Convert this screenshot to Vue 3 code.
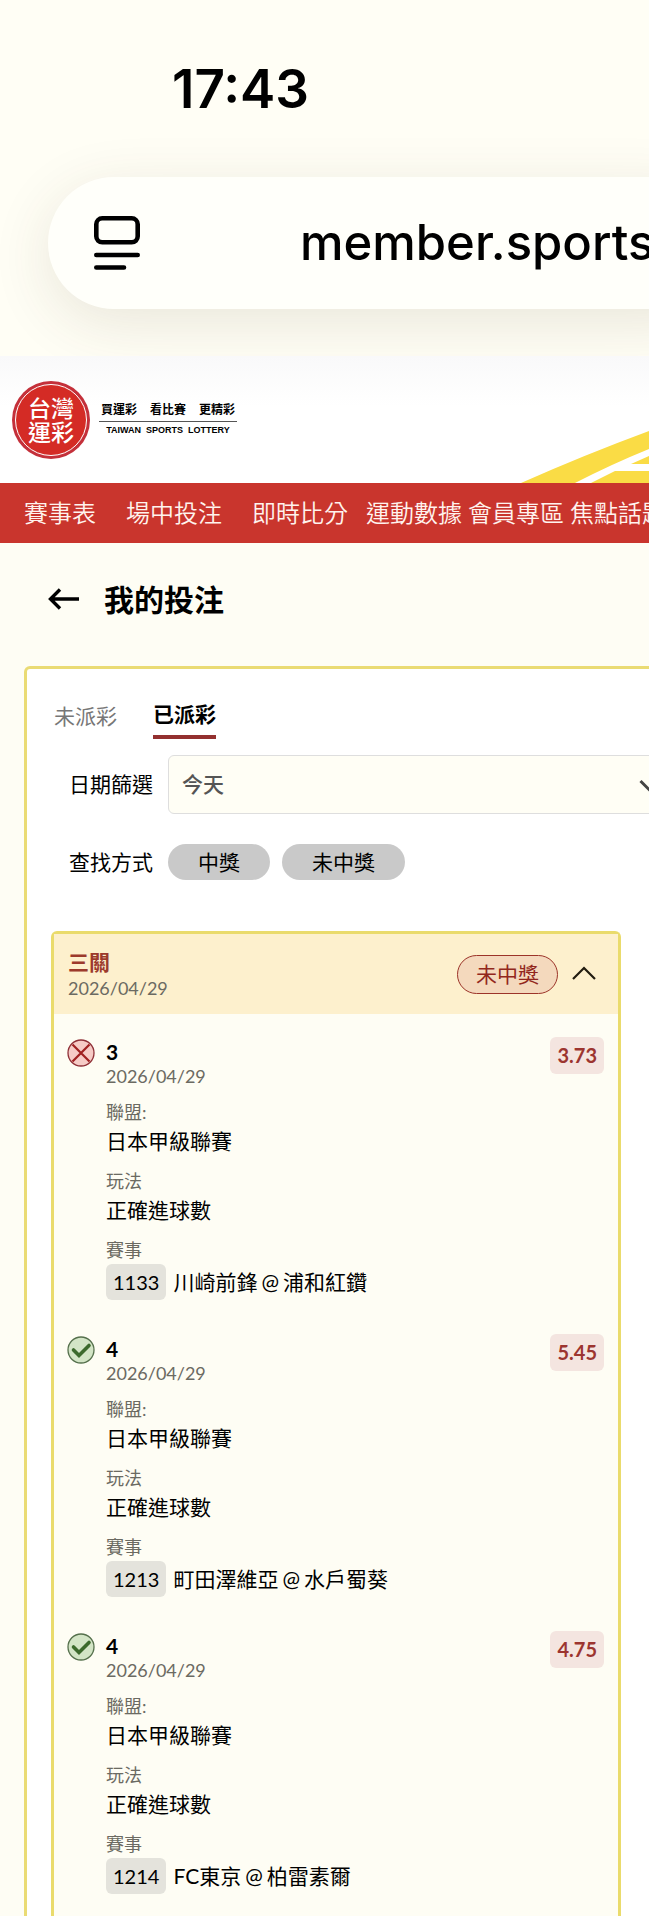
<script setup>
import { ref } from 'vue'

const navItems = [
  { label: '賽事表', gap: 'wide' },
  { label: '場中投注', gap: 'wide' },
  { label: '即時比分', gap: 'medium' },
  { label: '運動數據', gap: 'narrow' },
  { label: '會員專區', gap: 'narrow' },
  { label: '焦點話題', gap: 'narrow' }
]

const address = ref('member.sports')
const tabs = ['未派彩', '已派彩']
const activeTab = ref('已派彩')
const period = ref('今天')
const results = ['中獎', '未中獎']
const open = ref(true)

const bets = [
  { id: 1, won: false, pick: '3', date: '2026/04/29', league: '日本甲級聯賽', play: '正確進球數', code: '1133', away: '川崎前鋒', home: '浦和紅鑽', odds: '3.73' },
  { id: 2, won: true, pick: '4', date: '2026/04/29', league: '日本甲級聯賽', play: '正確進球數', code: '1213', away: '町田澤維亞', home: '水戶蜀葵', odds: '5.45' },
  { id: 3, won: true, pick: '4', date: '2026/04/29', league: '日本甲級聯賽', play: '正確進球數', code: '1214', away: 'FC東京', home: '柏雷素爾', odds: '4.75' }
]
</script>

<template>
  <div class="page">
    <div class="browser">
      <time class="clock">17:43</time>
      <div class="address-bar">
        <button class="icon-button" type="button" aria-label="頁面選單">
          <svg width="48" height="56" viewBox="0 0 48 56" fill="none" stroke="#000" stroke-width="4.6" stroke-linecap="round">
            <rect x="3.3" y="3.3" width="41.4" height="24" rx="6" />
            <path d="M3.3 40H44.7M3.3 52.5H31" />
          </svg>
        </button>
        <input v-model="address" class="address" type="text" aria-label="網址" />
      </div>
    </div>

    <header class="masthead">
      <a class="brand" href="#" aria-label="台灣運彩">
        <span class="seal"><span class="seal-ring"><span>台灣</span><span>運彩</span></span></span>
        <span class="slogan">
          <span class="slogan-zh"><span>買運彩</span><span>看比賽</span><span>更精彩</span></span>
          <span class="slogan-en"><span>TAIWAN</span><span>SPORTS</span><span>LOTTERY</span></span>
        </span>
      </a>
      <svg class="stripes" width="131" height="52" viewBox="0 0 131 52" fill="#fadc45" aria-hidden="true">
        <path d="M3 52Q66 24 131 0V18Q94 33 57 52Z" />
        <path d="M131 25V33H113Z" />
        <path d="M73 52L97 40H131V52Z" />
      </svg>
    </header>

    <nav class="nav">
      <a v-for="item in navItems" :key="item.label" href="#" :class="item.gap">{{ item.label }}</a>
    </nav>

    <div class="heading">
      <button class="icon-button" type="button" aria-label="返回">
        <svg width="32" height="24" viewBox="0 0 32 24" fill="none" stroke="#000" stroke-width="3.4">
          <path d="M31 12H3M12 2.5L2.5 12L12 21.5" />
        </svg>
      </button>
      <h1>我的投注</h1>
    </div>

    <main class="panel">
      <div class="tabs" role="tablist">
        <button
          v-for="tab in tabs"
          :key="tab"
          type="button"
          role="tab"
          :aria-selected="tab === activeTab"
          :class="{ active: tab === activeTab }"
          @click="activeTab = tab"
        >{{ tab }}</button>
      </div>

      <div class="field date-field">
        <label class="field-label" for="period">日期篩選</label>
        <div class="select-box">
          <select id="period" v-model="period">
            <option>今天</option>
          </select>
          <svg width="20" height="14" viewBox="0 0 20 14" fill="none" stroke="#444" stroke-width="3">
            <path d="M1.5 2L10 10.5L18.5 2" />
          </svg>
        </div>
      </div>

      <div class="field" role="group" aria-labelledby="result-label">
        <span id="result-label" class="field-label">查找方式</span>
        <div class="pills">
          <button v-for="result in results" :key="result" type="button">{{ result }}</button>
        </div>
      </div>

      <section class="ticket">
        <div class="ticket-head">
          <div>
            <h2>三關</h2>
            <p class="date">2026/04/29</p>
          </div>
          <div class="ticket-state">
            <span class="badge">未中獎</span>
            <button class="icon-button" type="button" aria-label="收合" :aria-expanded="open" @click="open = !open">
              <svg width="24" height="18" viewBox="0 0 24 18" fill="none" stroke="#221d10" stroke-width="2.2">
                <path d="M1 14L12 3L23 14" />
              </svg>
            </button>
          </div>
        </div>

        <ul v-if="open" class="bets">
          <li v-for="bet in bets" :key="bet.id" class="bet">
            <svg v-if="bet.won" class="mark" width="28" height="28" viewBox="0 0 28 28" fill="none">
              <circle cx="14" cy="14" r="13" fill="#d3e5c6" stroke="#55704c" stroke-width="1.3" />
              <path d="M6.5 14L12 19.5L22 9.5" stroke="#3c6a2c" stroke-width="3.6" stroke-linecap="round" />
            </svg>
            <svg v-else class="mark" width="28" height="28" viewBox="0 0 28 28" fill="none">
              <circle cx="14" cy="14" r="13" fill="#f6cbc6" stroke="#8f3037" stroke-width="1.3" />
              <path d="M5.5 5.5L22.5 22.5M22.5 5.5L5.5 22.5" stroke="#a02020" stroke-width="2.2" />
            </svg>
            <div class="detail">
              <h3>{{ bet.pick }}</h3>
              <p class="date">{{ bet.date }}</p>
              <dl>
                <div>
                  <dt>聯盟:</dt>
                  <dd>{{ bet.league }}</dd>
                </div>
                <div>
                  <dt>玩法</dt>
                  <dd>{{ bet.play }}</dd>
                </div>
                <div>
                  <dt>賽事</dt>
                  <dd class="match">
                    <span class="code">{{ bet.code }}</span>
                    <span class="teams"><span>{{ bet.away }}</span><span>@</span><span>{{ bet.home }}</span></span>
                  </dd>
                </div>
              </dl>
            </div>
            <span class="odds">{{ bet.odds }}</span>
          </li>
        </ul>
      </section>
    </main>
  </div>
</template>

<style>
body {
  background: #fffef5;
}
</style>

<style scoped>
.page {
  box-sizing: border-box;
  min-height: 100vh;
  display: flex;
  flex-direction: column;
  overflow: hidden;
  background: #fefdf4;
  color: #000;
  font-family: Lato, "Noto Sans CJK TC", sans-serif;
  font-size: 21px;
}

button,
input,
select {
  margin: 0;
  padding: 0;
  border: 0;
  background: none;
  color: inherit;
  font: inherit;
}

h1,
h2,
h3,
p,
ul,
dl,
dd {
  margin: 0;
  padding: 0;
}

.icon-button {
  display: flex;
  flex: none;
}

.browser {
  padding: 57px 0 47px 48px;
  overflow: hidden;
  background: #fffef5;
  font-family: Inter, sans-serif;
}

.clock {
  display: block;
  margin-left: 124px;
  margin-bottom: 56px;
  font-size: 53px;
  line-height: 64px;
  font-weight: 600;
}

.address-bar {
  display: flex;
  align-items: center;
  box-sizing: border-box;
  height: 132px;
  margin-right: -80px;
  padding-left: 45px;
  border-radius: 66px;
  background: #fffffa;
  box-shadow: 0 14px 60px rgba(70, 55, 35, 0.12);
}

.address {
  flex: 1;
  min-width: 0;
  margin-left: 159px;
  font-size: 49px;
  line-height: 64px;
  font-weight: 500;
}

.masthead {
  display: flex;
  justify-content: space-between;
  align-items: flex-end;
  height: 127px;
  background: linear-gradient(#f9f9fa, #fff 50px);
}

.brand {
  display: flex;
  align-items: center;
  gap: 9px;
  padding: 0 0 24px 12px;
  color: #000;
  text-decoration: none;
}

.seal {
  padding: 3px;
  border-radius: 50%;
  background: #c4303a;
}

.seal-ring {
  display: flex;
  flex-direction: column;
  align-items: center;
  justify-content: center;
  box-sizing: border-box;
  width: 72px;
  height: 72px;
  border: 1px solid #fff;
  border-radius: 50%;
  background: #d42b25;
  color: #fff;
  font-size: 23px;
  line-height: 24px;
  font-weight: 500;
}

.slogan {
  display: flex;
  flex-direction: column;
  margin-bottom: 3px;
}

.slogan-zh {
  display: flex;
  gap: 13px;
  padding: 0 2px 2px;
  border-bottom: 1px solid #555;
  font-size: 12px;
  line-height: 18px;
  font-weight: 700;
}

.slogan-en {
  display: flex;
  justify-content: center;
  gap: 5px;
  padding-top: 1px;
  font-family: "Liberation Sans", sans-serif;
  font-size: 9px;
  line-height: 14px;
  font-weight: 700;
}

.nav {
  display: flex;
  padding-left: 24px;
  overflow: hidden;
  background: #c9352d;
  font-size: 24px;
  line-height: 60px;
}

.nav a {
  flex: none;
  color: #fff3ee;
  font-weight: 350;
  text-decoration: none;
}

.nav .wide {
  margin-right: 30px;
}

.nav .medium {
  margin-right: 18px;
}

.nav .narrow {
  margin-right: 6px;
}

.heading {
  display: flex;
  align-items: center;
  gap: 24px;
  padding: 36px 48px 47px;
}

.heading h1 {
  font-size: 30px;
  line-height: 40px;
  font-weight: 700;
}

/* The panel is wider than a narrow window and runs past its right edge. */
.panel {
  display: flex;
  flex: 1;
  flex-direction: column;
  margin: 0 -40px 0 24px;
  padding: 28px 24px 0;
  border: 3px solid #eadb74;
  border-bottom: 0;
  border-radius: 6px 6px 0 0;
  background: #fff;
}

.tabs {
  display: flex;
  gap: 36px;
  margin-left: 3px;
}

.tabs button {
  padding: 2px 0;
  border-bottom: 4px solid transparent;
  color: #777;
  line-height: 34px;
}

.tabs .active {
  padding: 0 0 4px;
  border-bottom-color: #93302f;
  color: #000;
  font-weight: 700;
}

.field {
  display: flex;
  align-items: center;
  gap: 15px;
  margin-left: 18px;
}

.field-label {
  padding-bottom: 3px;
}

.date-field {
  margin-top: 16px;
  margin-bottom: 30px;
}

.select-box {
  position: relative;
  flex: 1;
}

.select-box select {
  box-sizing: border-box;
  width: 100%;
  height: 59px;
  padding: 0 13px 2px;
  border: 1px solid #dedede;
  border-radius: 6px;
  appearance: none;
  background: #fffef5;
  color: #555;
  font-weight: 500;
}

.select-box svg {
  position: absolute;
  top: 24px;
  right: 3px;
  pointer-events: none;
}

.pills {
  display: flex;
  gap: 12px;
}

.pills button {
  padding: 0 30px;
  border-radius: 18px;
  background: #c9c9c9;
  line-height: 36px;
}

.ticket {
  flex: 1;
  margin: 51px 41px 0 0;
  border: 3px solid #eadb6c;
  border-bottom: 0;
  border-radius: 6px 6px 0 0;
  background: #fefdf4;
}

.ticket-head {
  display: flex;
  align-items: center;
  justify-content: space-between;
  box-sizing: border-box;
  min-height: 80px;
  padding: 0 22px 0 14px;
  background: #fdf0cd;
}

.ticket-head h2 {
  color: #9c3a2c;
  font-size: 21px;
  line-height: 28px;
  font-weight: 700;
}

.ticket-state {
  display: flex;
  align-items: center;
  gap: 14px;
}

.date {
  color: #6b6a62;
  font-size: 18px;
  line-height: 24px;
}

.badge {
  padding: 0 18px 2px;
  border: 1px solid #9c3429;
  border-radius: 20px;
  background: #f4d9bd;
  color: #92271c;
  line-height: 35px;
}

.bets {
  display: flex;
  flex-direction: column;
  gap: 34px;
  padding: 23px 14px 22px 13px;
  list-style: none;
}

.bet {
  display: flex;
  align-items: flex-start;
}

.mark {
  flex: none;
  margin-top: 2px;
}

.detail {
  flex: 1;
  margin-top: 3px;
  margin-left: 11px;
}

.detail h3 {
  font-size: 21px;
  line-height: 24px;
  font-weight: 700;
}

.detail dl div {
  margin-top: 10px;
}

.detail dt {
  color: #6b6a62;
  font-size: 18px;
  line-height: 28px;
}

.detail dd {
  padding-bottom: 2px;
  line-height: 29px;
}

.detail .match {
  display: flex;
  align-items: center;
  gap: 7px;
  padding-bottom: 0;
  line-height: 36px;
}

.code {
  padding: 0 7px;
  border-radius: 6px;
  background: #e4e3dc;
  font-size: 20px;
}

.teams {
  display: flex;
  gap: 4px;
}

.odds {
  padding: 0 7px;
  border-radius: 6px;
  background: #f4e5e0;
  color: #9c3530;
  font-size: 20px;
  line-height: 37px;
  font-weight: 700;
}
</style>
